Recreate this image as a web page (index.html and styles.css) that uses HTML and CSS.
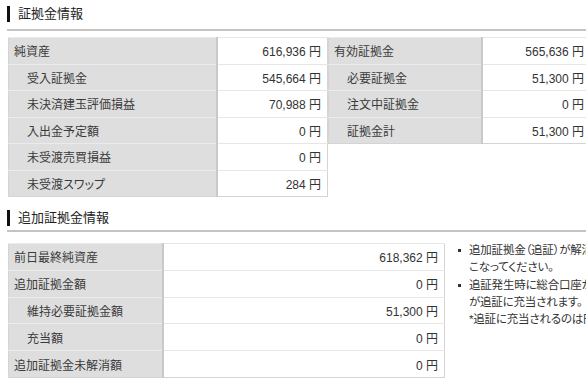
FILE: index.html
```html
<!DOCTYPE html>
<html lang="ja">
<head>
<meta charset="utf-8">
<link rel="stylesheet" href="styles.css">
</head>
<body>
<div class="page">
  <h2 class="heading"><span>証拠金情報</span></h2>
  <div class="pair">
    <table class="grid grid-left">
      <tr><th>純資産</th><td>616,936 円</td></tr>
      <tr><th class="sub">受入証拠金</th><td>545,664 円</td></tr>
      <tr><th class="sub">未決済建玉評価損益</th><td>70,988 円</td></tr>
      <tr><th class="sub">入出金予定額</th><td>0 円</td></tr>
      <tr><th class="sub">未受渡売買損益</th><td>0 円</td></tr>
      <tr><th class="sub">未受渡スワップ</th><td>284 円</td></tr>
    </table>
    <table class="grid grid-right">
      <tr><th>有効証拠金</th><td>565,636 円</td></tr>
      <tr><th class="sub">必要証拠金</th><td>51,300 円</td></tr>
      <tr><th class="sub">注文中証拠金</th><td>0 円</td></tr>
      <tr><th class="sub">証拠金計</th><td>51,300 円</td></tr>
    </table>
  </div>

  <h2 class="heading heading-second"><span>追加証拠金情報</span></h2>
  <div class="pair pair-second">
    <table class="grid grid-add">
      <tr><th>前日最終純資産</th><td>618,362 円</td></tr>
      <tr><th>追加証拠金額</th><td>0 円</td></tr>
      <tr><th class="sub">維持必要証拠金額</th><td>51,300 円</td></tr>
      <tr><th class="sub">充当額</th><td>0 円</td></tr>
      <tr><th>追加証拠金未解消額</th><td>0 円</td></tr>
    </table>
    <ul class="notes">
      <li>追加証拠金（追証）が解消されるよう、ご入金等をお<br>こなってください。</li>
      <li>追証発生時に総合口座から自動的に振替可能な金額<br>が追証に充当されます。<br>*追証に充当されるのは円貨のみとなります。</li>
    </ul>
  </div>
</div>
</body>
</html>
```
FILE: styles.css
```css
html, body {
  margin: 0;
  padding: 0;
  background: #fff;
  overflow: hidden;
}
.page {
  width: 640px;
  padding: 6px 0 0 7px;
  font-family: "Liberation Sans", "Noto Sans CJK JP", sans-serif;
  font-feature-settings: "palt";
  color: #333;
  font-size: 12px;
}
.heading {
  margin: 0;
  padding: 0 0 7px;
  border-bottom: 2px solid #c4c4c4;
  font-size: 13px;
  font-weight: normal;
  color: #222;
}
.heading span {
  display: block;
  border-left: 3px solid #111;
  padding-left: 8px;
  line-height: 16px;
}
.heading-second {
  margin-top: 13px;
  padding-bottom: 4px;
}
.pair {
  display: flex;
  align-items: flex-start;
  margin: 6px 0 0 1px;
}
.pair-second {
  margin-top: 11px;
}
.grid {
  flex-shrink: 0;
  border-collapse: collapse;
  table-layout: fixed;
  border: 1px solid #d4d4d4;
}
.grid tr {
  height: 26.5px;
}
.grid th, .grid td {
  padding: 0 6px;
  font-weight: normal;
  border-top: 1px solid #e6e6e6;
  white-space: nowrap;
}
.grid th {
  background: #dedede;
  text-align: left;
  padding-left: 5px;
  border-right: 2px solid #c9c9c9;
  border-top-color: #ebebeb;
  color: #3a3a3a;
}
.grid th.sub {
  padding-left: 18px;
}
.grid td {
  text-align: right;
  background: #fff;
}
.grid-left {
  width: 320px;
}
.grid-left th { width: 196px; }
.grid-right {
  width: 262px;
  border-right: none;
}
.grid-right th { width: 141px; }
.grid-add tr {
  height: 26.8px;
}
.grid-add {
  width: 437px;
}
.grid-add th { width: 142px; }
.notes {
  flex-shrink: 0;
  list-style: none;
  margin: -1px 0 0 8px;
  padding: 0;
  font-size: 11.5px;
  line-height: 17px;
  letter-spacing: -0.2px;
  white-space: nowrap;
}
.notes li {
  position: relative;
  padding-left: 16px;
  margin-bottom: 1px;
}
.notes li::before {
  content: "";
  position: absolute;
  left: 5px;
  top: 7px;
  width: 3px;
  height: 3px;
  background: #333;
}
```
